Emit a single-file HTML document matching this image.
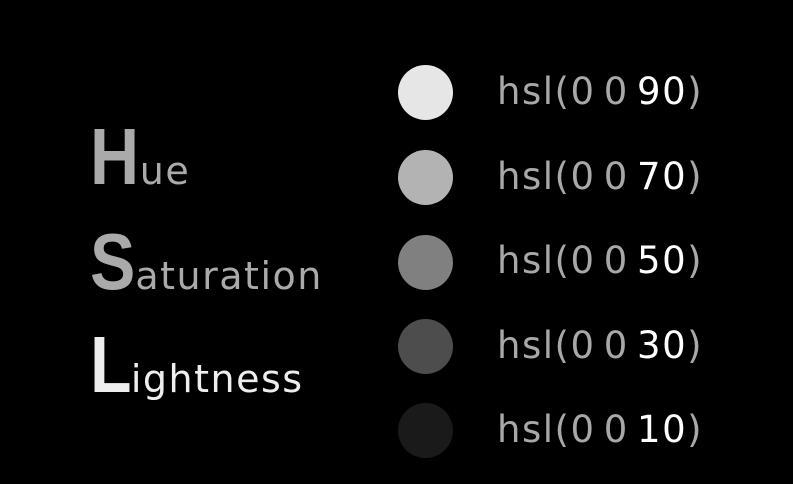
<!DOCTYPE html>
<html><head><style>
html,body{margin:0;padding:0;background:#000;width:793px;height:484px;overflow:hidden;font-family:"DejaVu Sans","Liberation Sans",sans-serif}
.c{position:absolute;left:398px;width:55px;height:55px;border-radius:50%}
.t{position:absolute;left:497px;font-size:37px;letter-spacing:1.5px;word-spacing:-5px;color:#a8a8a8;line-height:1}
.t b{color:#fff;font-weight:normal}
.w{position:absolute;left:90px;line-height:1;white-space:nowrap}
.w .b{font-size:80px;font-family:"Liberation Sans",sans-serif;font-weight:bold;display:inline-block;transform:scaleX(0.85);transform-origin:left;margin-right:-8px}
.w .s{font-size:38px;letter-spacing:1.5px}
</style></head><body>
<div class="c" style="top:65px;background:#e6e6e6"></div>
<div class="c" style="top:150px;background:#b3b3b3"></div>
<div class="c" style="top:235px;background:#808080"></div>
<div class="c" style="top:319px;background:#4d4d4d"></div>
<div class="c" style="top:403px;background:#1a1a1a"></div>
<div class="t" style="top:73px">hsl(0 0 <b>90</b>)</div>
<div class="t" style="top:158px">hsl(0 0 <b>70</b>)</div>
<div class="t" style="top:242px">hsl(0 0 <b>50</b>)</div>
<div class="t" style="top:327px">hsl(0 0 <b>30</b>)</div>
<div class="t" style="top:411px">hsl(0 0 <b>10</b>)</div>
<div class="w" style="top:117px;color:#aaa"><span class="b">H</span><span class="s">ue</span></div>
<div class="w" style="top:222px;color:#aaa"><span class="b">S</span><span class="s">aturation</span></div>
<div class="w" style="top:325px;color:#eee"><span class="b">L</span><span class="s">ightness</span></div>
</body></html>
